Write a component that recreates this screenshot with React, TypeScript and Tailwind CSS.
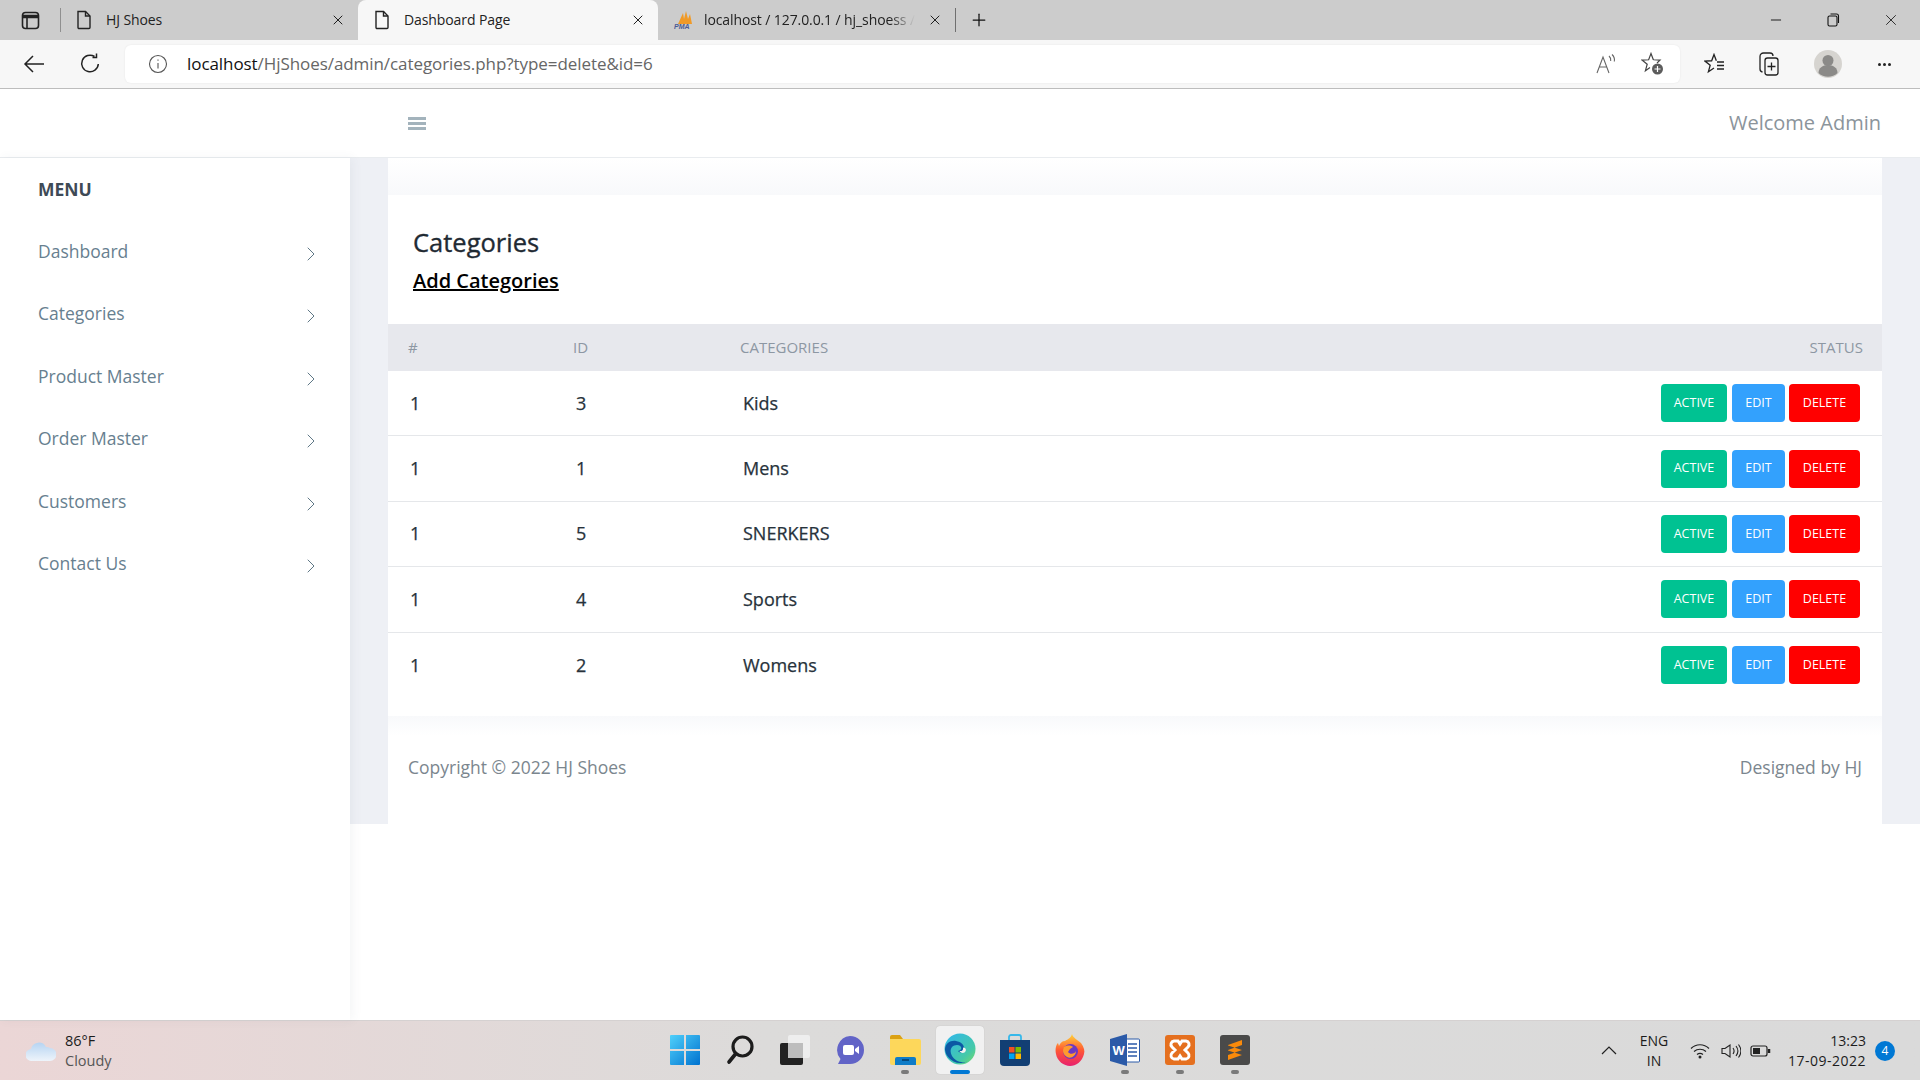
import { ChevronRight, Minus, Plus, X } from "lucide-react";
import type { ReactNode } from "react";

const menu = ["Dashboard", "Categories", "Product Master", "Order Master", "Customers", "Contact Us"];

const rows = [
  { id: 3, name: "Kids" },
  { id: 1, name: "Mens" },
  { id: 5, name: "SNERKERS" },
  { id: 4, name: "Sports" },
  { id: 2, name: "Womens" },
];

function PageIcon() {
  return (
    <svg width="16" height="20" viewBox="0 0 16 20" fill="none" stroke="#222" strokeWidth="1.4">
      <path d="M2 1.5h7.5L14 6v11.5a1 1 0 0 1-1 1H3a1 1 0 0 1-1-1z" />
      <path d="M9.5 1.5V6H14" />
    </svg>
  );
}

function Tab({ width, title, active, faded, icon }: { width: string; title: string; active?: boolean; faded?: boolean; icon: ReactNode }) {
  return (
    <div className={`${width} flex h-10 shrink-0 items-center rounded-t-lg pr-3 ${active ? "bg-[#f7f7f7]" : ""}`}>
      <span className="flex w-[30px] shrink-0 items-center">{icon}</span>
      <span
        className={`-mt-[2px] flex-1 overflow-hidden whitespace-nowrap text-[14px] tracking-[-0.1px] text-[#222] ${
          faded ? "mr-[12px] [mask-image:linear-gradient(to_right,black_88%,transparent)]" : ""
        }`}
      >
        {title}
      </span>
      <X size={16} strokeWidth={1.4} className="shrink-0 text-[#111]" />
    </div>
  );
}

function TabStrip() {
  return (
    <div className="flex h-10 shrink-0 items-center bg-[#cccccc]">
      <div className="flex h-10 w-[60px] shrink-0 items-center pl-[21px]">
        <svg width="19" height="19" viewBox="0 0 19 19" fill="none" stroke="#222" strokeWidth="1.6">
          <rect x="1.5" y="1.5" width="16" height="16" rx="3" />
          <path d="M1.5 5.5h16" strokeWidth="3.5" />
          <path d="M6 5.5v12" />
        </svg>
      </div>
      <div className="h-6 w-px shrink-0 bg-[#8f8f8f]" />
      <Tab width="w-[297px] pl-[15px]" title="HJ Shoes" icon={<PageIcon />} />
      <Tab width="w-[300px] pl-[16px]" title="Dashboard Page" active icon={<PageIcon />} />
      <Tab
        width="w-[297px] pl-4"
        title="localhost / 127.0.0.1 / hj_shoess /"
        faded
        icon={
          <svg width="22" height="20" viewBox="0 0 22 20">
            <path d="M4 14 9 3l1 6 2-8 2 8 2-5 2 10z" fill="#f09a27" />
            <text x="0" y="19" fontSize="7" fontStyle="italic" fontWeight="700" fill="#4a5a94" fontFamily="Liberation Sans, sans-serif">
              PMA
            </text>
          </svg>
        }
      />
      <div className="h-6 w-px shrink-0 bg-[#6f6f6f]" />
      <Plus size={20} strokeWidth={1.5} className="ml-[13px] shrink-0 text-[#111]" />
      <div className="ml-auto flex items-center gap-[42px] pr-[20px]">
        <Minus size={16} strokeWidth={1.4} className="text-[#111]" />
        <svg width="14" height="14" viewBox="0 0 14 14" fill="none" stroke="#111" strokeWidth="1.1">
          <rect x="2" y="3" width="9" height="10" rx="1.5" />
          <path d="M4.5 1h6A2 2 0 0 1 12.5 3v7" />
        </svg>
        <X size={18} strokeWidth={1.1} className="text-[#111]" />
      </div>
    </div>
  );
}

function ToolBar() {
  return (
    <div className="flex h-[49px] shrink-0 items-start border-b border-[#bdbdbd] bg-[#f7f7f7] pt-[5px]">
      <div className="flex h-[38px] w-[125px] shrink-0 items-center gap-[34px] pl-[23px]">
        <svg width="22" height="20" viewBox="0 0 22 20" fill="none" stroke="#222" strokeWidth="1.5">
          <path d="M21 10H2M10 2l-8 8 8 8" />
        </svg>
        <svg width="22" height="22" viewBox="0 0 22 22" fill="none" stroke="#222" strokeWidth="1.5">
          <path d="M15.5 3.5A8.3 8.3 0 1 0 19.3 11" />
          <path d="M15.5 0.5v4h-4" transform="translate(2 0)" />
        </svg>
      </div>
      <div className="flex h-[38px] w-[1555px] shrink-0 items-center rounded-md bg-white pl-[23px] pr-[15px] shadow-[0_0_2px_rgba(0,0,0,0.08)]">
        <svg width="20" height="20" viewBox="0 0 20 20" fill="none" stroke="#555" strokeWidth="1.1">
          <circle cx="10" cy="10" r="8.5" />
          <path d="M10 9v5.5M10 5.5v1.3" />
        </svg>
        <span className="ml-[19px] whitespace-nowrap text-[17px] tracking-[-0.07px] text-[#666]">
          <span className="text-[#111]">localhost</span>/HjShoes/admin/categories.php?type=delete&amp;id=6
        </span>
        <div className="ml-auto flex items-center gap-[24px]">
          <svg width="22" height="22" viewBox="0 0 22 22" fill="none" stroke="#666" strokeWidth="1.1">
            <path d="M2 20 8 4l6 16M4 14h8" />
            <path d="M14 3c1.500 1.300 2 3 1.700 5M17 1.500c2.200 2 2.800 4.500 2.300 7" />
          </svg>
          <svg width="24" height="24" viewBox="0 0 24 24" fill="none" stroke="#444" strokeWidth="1.2">
            <path d="M12.350 7.760 10 1.500 7.650 7.760.960 8.060 6.200 12.240 4.420 18.690 9 15.500M12.350 7.760l6.690.3L16 11" />
            <circle cx="16.500" cy="17" r="5.500" fill="#5c5c5c" stroke="none" />
            <path d="M16.500 14v6M13.500 17h6" stroke="#fff" />
          </svg>
        </div>
      </div>
      <div className="flex h-[38px] flex-1 items-center gap-[32px] pl-[24px]">
        <svg width="22" height="22" viewBox="0 0 22 22" fill="none" stroke="#222" strokeWidth="1.3">
          <path d="M12.350 7.760 10 1.500 7.650 7.760.960 8.060 6.200 12.240 4.420 18.690 10 15" />
          <path d="M13 9h7M13 12.500h7M13 16h7" />
        </svg>
        <svg width="22" height="26" viewBox="0 0 22 26" fill="none" stroke="#222" strokeWidth="1.3">
          <rect x="7" y="7" width="13" height="17" rx="2.500" />
          <path d="M4.500 21A3 3 0 0 1 2 18V5.500A3.500 3.500 0 0 1 5.500 2H12a3 3 0 0 1 3 3M13.500 11.500v8M9.500 15.500h8" />
        </svg>
        <svg width="28" height="28" viewBox="0 0 28 28" className="ml-[2px]">
          <circle cx="14" cy="14" r="14" fill="#d6d4d0" />
          <circle cx="14" cy="10.500" r="5.500" fill="#8b8a88" />
          <path d="M4.500 23c0-5 4-8 9.500-8s9.500 3 9.500 8a14 14 0 0 1-19 0z" fill="#8b8a88" />
        </svg>
        <span className="flex items-center gap-[2px] pl-[4px]">
          <span className="h-[3px] w-[3px] rounded-full bg-[#222]" />
          <span className="h-[3px] w-[3px] rounded-full bg-[#222]" />
          <span className="h-[3px] w-[3px] rounded-full bg-[#222]" />
        </span>
      </div>
    </div>
  );
}

function TopHeader() {
  return (
    <div className="flex h-[69px] shrink-0 items-center justify-between border-b border-[#e9ecef] bg-white pl-[408px] pr-[39px]">
      <div className="flex w-[18px] flex-col gap-[2px]">
        <span className="h-[3px] bg-[#a3b3bc]" />
        <span className="h-[3px] bg-[#a3b3bc]" />
        <span className="h-[3px] bg-[#a3b3bc]" />
      </div>
      <span className="text-[20px] text-[#8b949b]">Welcome Admin</span>
    </div>
  );
}

function Sidebar() {
  return (
    <aside className="relative z-10 w-[350px] shrink-0 bg-white pl-[38px] pr-[31px] pt-[19px] shadow-[3px_0_10px_rgba(70,80,110,0.06)]">
      <div className="text-[17.500px] font-bold leading-[24px] text-[#3e4a56]">MENU</div>
      <ul className="mt-[19px]">
        {menu.map((item) => (
          <li key={item} className="flex h-[62.500px] items-center justify-between text-[17.500px] text-[#67808f]">
            <span className="-mt-[1px]">{item}</span>
            <ChevronRight size={24} strokeWidth={0.95} className="mt-[5px] -mr-[4px] text-[#55707f]" />
          </li>
        ))}
      </ul>
    </aside>
  );
}

function ActionButton({ width, color, label }: { width: string; color: string; label: string }) {
  return (
    <button className={`${width} ${color} h-[38px] rounded-[4px] text-[12.500px] text-white`}>{label}</button>
  );
}

function CategoriesCard() {
  return (
    <section className="bg-white">
      <div className="h-[129px] pl-[25px] pt-[29px]">
        <h1 className="text-[25.500px] leading-[36px] text-[#1f2a33] [-webkit-text-stroke:0.35px_#1f2a33]">Categories</h1>
        <a className="mt-[6px] block w-fit text-[20px] font-semibold leading-[30px] text-black underline">Add Categories</a>
      </div>
      <div className="grid h-[47px] grid-cols-[165px_167px_1fr_auto] items-center bg-[#e7e8ed] pb-[1px] pl-5 pr-[19px] text-[15px] text-[#8d97a3]">
        <span>#</span>
        <span>ID</span>
        <span>CATEGORIES</span>
        <span>STATUS</span>
      </div>
      {rows.map((row, i) => (
        <div
          key={row.id}
          className={`grid h-[65.400px] grid-cols-[166px_167px_1fr_auto] items-center pl-[22px] pr-[22px] text-[18px] text-[#27323b] ${
            i < rows.length - 1 ? "border-b border-[#e5e7ea]" : ""
          }`}
        >
          <span className="[-webkit-text-stroke:0.25px_#27323b]">1</span>
          <span className="[-webkit-text-stroke:0.25px_#27323b]">{row.id}</span>
          <span className="[-webkit-text-stroke:0.25px_#27323b]">{row.name}</span>
          <div className="flex gap-[5px]">
            <ActionButton width="w-[66px]" color="bg-[#00c292]" label="ACTIVE" />
            <ActionButton width="w-[53px]" color="bg-[#33a1fd]" label="EDIT" />
            <ActionButton width="w-[71px] -ml-[1px]" color="bg-[#ff0000]" label="DELETE" />
          </div>
        </div>
      ))}
      <div className="h-[18px]" />
    </section>
  );
}

function MainArea() {
  return (
    <main className="min-w-0 flex-1">
      <div className="h-[666px] bg-[#eef0f5] px-[38px]">
        <div className="h-[37px] bg-gradient-to-b from-white to-[#f8f9fb]" />
        <CategoriesCard />
        <footer className="flex h-[108px] items-center justify-between bg-gradient-to-b from-[#f8f9fb] to-white to-[18%] px-5 pb-[5px] text-[17.500px] text-[#7b868e]">
          <span>Copyright © 2022 HJ Shoes</span>
          <span>Designed by HJ</span>
        </footer>
      </div>
    </main>
  );
}

function Dock({ children, running, active }: { children: ReactNode; running?: boolean; active?: boolean }) {
  return (
    <div className={`relative flex h-12 w-[48px] shrink-0 items-center justify-center rounded ${active ? "bg-[#f1f1f1] shadow-[0_0_1px_rgba(0,0,0,0.2)]" : ""}`}>
      {children}
      {running && <span className="absolute bottom-0 left-1/2 h-[4px] w-2 -translate-x-1/2 rounded-full bg-[#7a7a7a]" />}
      {active && <span className="absolute bottom-0 left-1/2 h-[4px] w-5 -translate-x-1/2 rounded-full bg-[#0078d4]" />}
    </div>
  );
}

function TaskIcons() {
  return (
    <div className="flex items-center gap-[7px]">
      <Dock>
        <svg width="30" height="30" viewBox="0 0 30 30">
          <defs>
            <linearGradient id="win" x1="0" y1="0" x2="1" y2="1">
              <stop offset="0" stopColor="#4fd0fb" />
              <stop offset="1" stopColor="#0072cf" />
            </linearGradient>
          </defs>
          <path d="M0 1a1 1 0 0 1 1-1h13v14H0zM16 0h13a1 1 0 0 1 1 1v13H16zM0 16h14v14H1a1 1 0 0 1-1-1zM16 16h14v13a1 1 0 0 1-1 1H16z" fill="url(#win)" />
        </svg>
      </Dock>
      <Dock>
        <svg width="28" height="30" viewBox="0 0 28 30" fill="none" stroke="#1c1c1c">
          <circle cx="16.500" cy="11.500" r="9.500" strokeWidth="3.200" />
          <path d="M9.500 19 3 27" strokeWidth="3.600" strokeLinecap="round" />
        </svg>
      </Dock>
      <Dock>
        <svg width="30" height="30" viewBox="0 0 30 30">
          <rect x="0" y="8" width="23" height="22" rx="2" fill="#222" />
          <rect x="8" y="0" width="22" height="23" rx="2" fill="#f1f1f1" fillOpacity="0.85" />
          <rect x="8" y="8" width="15" height="15" fill="#bdbdbd" />
        </svg>
      </Dock>
      <Dock>
        <svg width="30" height="30" viewBox="0 0 30 30">
          <path d="M15 1a14 14 0 0 1 0 28H3l2.500-5A14 14 0 0 1 15 1z" fill="#6264c7" />
          <rect x="8" y="10" width="11" height="10" rx="2" fill="#fff" />
          <path d="M20 14l4-3v8l-4-3z" fill="#fff" />
        </svg>
      </Dock>
      <Dock running>
        <svg width="31" height="30" viewBox="0 0 31 30">
          <path d="M0 2a2 2 0 0 1 2-2h8l3 4h-13z" fill="#dba113" />
          <path d="M0 4h29a2 2 0 0 1 2 2v22a2 2 0 0 1-2 2H2a2 2 0 0 1-2-2z" fill="#fdd75b" />
          <path d="M5 24a2 2 0 0 1 2-2h17a2 2 0 0 1 2 2v6H5z" fill="#0f7cc7" />
          <path d="M12 25h7" stroke="#053a66" strokeWidth="1.500" />
        </svg>
      </Dock>
      <Dock active>
        <svg width="32" height="34" viewBox="0 0 32 34">
          <defs>
            <linearGradient id="edgeA" x1="0" y1="0" x2="1" y2="1">
              <stop offset="0" stopColor="#2fb6ee" />
              <stop offset="0.700" stopColor="#45c9a8" />
              <stop offset="1" stopColor="#7bdc62" />
            </linearGradient>
          </defs>
          <circle cx="16" cy="16" r="15.500" fill="url(#edgeA)" />
          <path d="M1 17c0-7 6-10 11-9 6 1 9 5 8 9-1 3-5 3-6 1 5-1 4-6-1-6-6 0-8 6-5 11 3 5 10 8 16 5a15.500 15.500 0 0 1-23-11z" fill="#0c59a4" />
          <path d="M19 14.500c3 0 4 3 1.500 5-2 1-4.500 0-5-1.500 2 .5 4-.5 3.500-3.500z" fill="#f1f1f1" />
        </svg>
      </Dock>
      <Dock>
        <svg width="30" height="32" viewBox="0 0 30 32">
          <path d="M9 6V3a2 2 0 0 1 2-2h8a2 2 0 0 1 2 2v3" fill="none" stroke="#37b8ea" strokeWidth="1.800" />
          <path d="M0 6h30v22a4 4 0 0 1-4 4H4a4 4 0 0 1-4-4z" fill="#123f74" />
          <rect x="9" y="13" width="5.500" height="5.500" fill="#f25022" />
          <rect x="15.500" y="13" width="5.500" height="5.500" fill="#7fba00" />
          <rect x="9" y="19.500" width="5.500" height="5.500" fill="#00a4ef" />
          <rect x="15.500" y="19.500" width="5.500" height="5.500" fill="#ffb900" />
        </svg>
      </Dock>
      <Dock>
        <svg width="30" height="32" viewBox="0 0 30 32">
          <defs>
            <linearGradient id="fox" x1="0.500" y1="0" x2="0.500" y2="1">
              <stop offset="0" stopColor="#ffd53a" />
              <stop offset="0.500" stopColor="#ff5a33" />
              <stop offset="1" stopColor="#e8206f" />
            </linearGradient>
          </defs>
          <path d="M17 0c1 4 6 6 9 9 3 4 4 8 3 11-2 8-8 12-14 12S2 27 1 20C0 15 1 11 3 9l1 3c1-3 3-5 6-5 3-2 6-3 7-7z" fill="url(#fox)" />
          <circle cx="15.500" cy="17.500" r="7.500" fill="#6b39c4" />
          <path d="M9 13c3-2 7-2 9 0l-3 2-2 3c2 3 7 2 8-1 0 5-5 8-9 6-4-2-5-7-3-10z" fill="#ff9a2e" />
        </svg>
      </Dock>
      <Dock running>
        <svg width="30" height="32" viewBox="0 0 30 32">
          <rect x="10" y="5" width="19.500" height="23" rx="1" fill="#fff" stroke="#2b5aa8" />
          <path d="M18 10h9M18 14h9M18 18h9M18 22h9" stroke="#2b5aa8" strokeWidth="1.500" />
          <path d="M0 5 17 0v32L0 27z" fill="#2b5aa8" />
          <text x="2.500" y="21" fontSize="13" fontWeight="700" fill="#fff" fontFamily="Liberation Sans, sans-serif">
            W
          </text>
        </svg>
      </Dock>
      <Dock running>
        <svg width="30" height="30" viewBox="0 0 30 30">
          <rect width="30" height="30" rx="3" fill="#e5701f" />
          <path d="M9 6h4l2 3 2-3h4a3.500 3.500 0 0 1 2 6l-3 3 3 3a3.500 3.500 0 0 1-2 6h-4l-2-3-2 3H9a3.500 3.500 0 0 1-2-6l3-3-3-3a3.500 3.500 0 0 1 2-6z" fill="none" stroke="#fff" strokeWidth="3" />
        </svg>
      </Dock>
      <Dock running>
        <svg width="30" height="30" viewBox="0 0 30 30">
          <rect width="30" height="30" rx="3" fill="#4a4a4a" />
          <path d="M22 5 8 10v5l14-5zM8 10.500l14 4.500v5L8 15.500zM22 15 8 20v5l14-5z" fill="#f98a0b" />
        </svg>
      </Dock>
    </div>
  );
}

function Tray() {
  return (
    <div className="flex items-center pr-[25px] text-[#1c1c1c]">
      <svg width="16" height="9" viewBox="0 0 16 9" fill="none" stroke="#222" strokeWidth="1.200">
        <path d="M1 8l7-7 7 7" />
      </svg>
      <div className="ml-[19px] w-[36px] text-center text-[14px] leading-[20px]">
        <div>ENG</div>
        <div>IN</div>
      </div>
      <svg width="20" height="16" viewBox="0 0 20 16" fill="none" stroke="#222" strokeWidth="1.200" className="ml-[18px]">
        <path d="M1 5.500c5-5 13-5 18 0M4 8.500c3.500-3 8.500-3 12 0M7 11.500c1.800-1.400 4.200-1.400 6 0" />
        <circle cx="10" cy="14" r="1.500" fill="#222" stroke="none" />
      </svg>
      <svg width="20" height="16" viewBox="0 0 20 16" fill="none" stroke="#222" strokeWidth="1.100" className="ml-[11px]">
        <path d="M1 5.500h3L9 2v12l-5-3.500H1zM12 5c1.300 1.800 1.300 4.200 0 6M15 3c2.300 3 2.300 7 0 10M17.500 1.500c3 4 3 9 0 13" />
      </svg>
      <svg width="21" height="12" viewBox="0 0 21 12" fill="none" stroke="#222" strokeWidth="1.200" className="ml-[9px]">
        <rect x="1" y="1" width="16" height="10" rx="2" />
        <rect x="3" y="3" width="7" height="6" fill="#222" stroke="none" />
        <path d="M19 4v4" strokeWidth="2.500" />
      </svg>
      <div className="ml-[19px] w-[76px] whitespace-nowrap text-right text-[14px] leading-[20px]">
        <div>13:23</div>
        <div className="-ml-[10px] tracking-[0.5px]">17-09-2022</div>
      </div>
      <span className="ml-[9px] flex h-5 w-5 items-center justify-center rounded-full bg-[#0078d4] text-[12px] text-white">4</span>
    </div>
  );
}

function Taskbar() {
  return (
    <div className="relative flex h-[60px] shrink-0 items-center justify-between border-t border-[#d5d1d1] bg-gradient-to-r from-[#ebd6d6] via-[#dcdbda] via-40% to-[#dadada]">
      <div className="flex items-center pl-[26px]">
        <svg width="30" height="20" viewBox="0 0 30 20">
          <defs>
            <linearGradient id="cloud" x1="0.500" y1="0" x2="0.500" y2="1">
              <stop offset="0" stopColor="#b6d4f2" />
              <stop offset="1" stopColor="#eef4fb" />
            </linearGradient>
          </defs>
          <path d="M6 20a6 6 0 0 1-1-12 8 8 0 0 1 15-2 6 6 0 0 1 4 1 6.500 6.500 0 0 1 0 13z" fill="url(#cloud)" />
        </svg>
        <div className="ml-[9px] text-[14.500px] leading-[20px]">
          <div className="text-[#1c1c1c]">86°F</div>
          <div className="text-[#555]">Cloudy</div>
        </div>
      </div>
      <div className="absolute left-[661px] top-[5px]">
        <TaskIcons />
      </div>
      <Tray />
    </div>
  );
}

export default function App() {
  return (
    <div className="flex h-screen w-[1920px] flex-col overflow-hidden bg-white font-['Open_Sans',sans-serif]">
      <TabStrip />
      <ToolBar />
      <TopHeader />
      <div className="flex min-h-0 flex-1">
        <Sidebar />
        <MainArea />
      </div>
      <Taskbar />
    </div>
  );
}
